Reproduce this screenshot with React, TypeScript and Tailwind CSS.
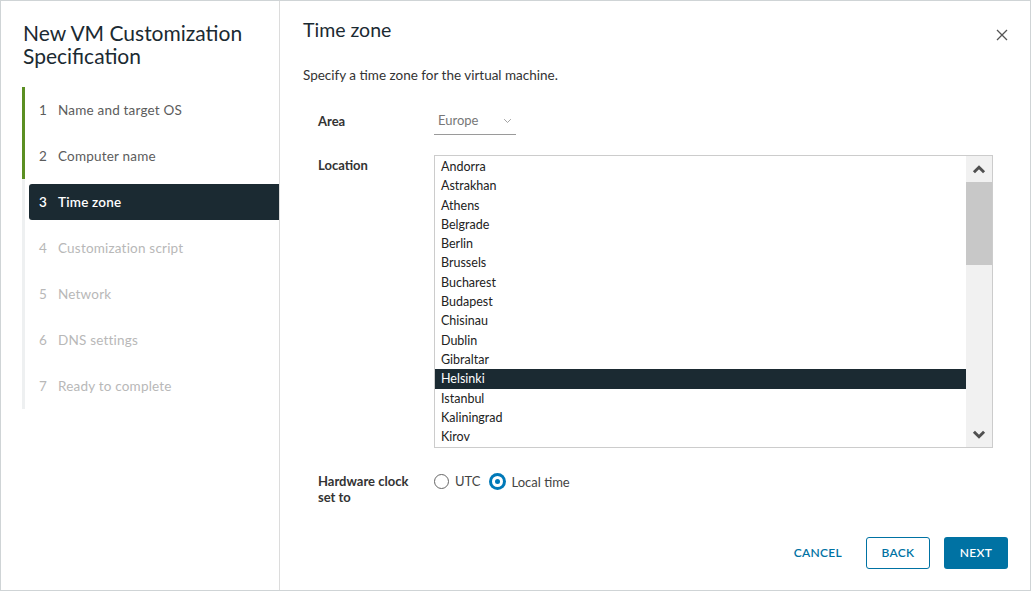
import { useState } from "react"

const steps = [
  { n: 1, label: "Name and target OS", state: "done" },
  { n: 2, label: "Computer name", state: "done" },
  { n: 3, label: "Time zone", state: "active" },
  { n: 4, label: "Customization script", state: "todo" },
  { n: 5, label: "Network", state: "todo" },
  { n: 6, label: "DNS settings", state: "todo" },
  { n: 7, label: "Ready to complete", state: "todo" },
]

const locations = [
  "Andorra",
  "Astrakhan",
  "Athens",
  "Belgrade",
  "Berlin",
  "Brussels",
  "Bucharest",
  "Budapest",
  "Chisinau",
  "Dublin",
  "Gibraltar",
  "Helsinki",
  "Istanbul",
  "Kaliningrad",
  "Kirov",
]

function Chevron({ dir, className, width = 2.4 }: { dir: "up" | "down"; className?: string; width?: number }) {
  return (
    <svg viewBox="0 0 12 8" className={className} fill="none" stroke="currentColor" strokeWidth={width}>
      {dir === "up" ? <path d="M1.5 6.5 6 2l4.5 4.5" /> : <path d="M1.5 1.5 6 6l4.5-4.5" />}
    </svg>
  )
}

export default function App() {
  const [location, setLocation] = useState("Helsinki")
  const [clock, setClock] = useState("local")

  return (
    <div
      className="w-[1031px] h-[591px] flex bg-white border border-[#cfd4d6] text-[#313131] overflow-hidden"
      style={{ fontFamily: "Lato, 'Noto Sans', sans-serif" }}
    >
      {/* Steps sidebar */}
      <aside className="w-[279px] shrink-0 border-r border-[#dcdcdc] pt-[20px]">
        <h1 className="pl-[22px] text-[21px] leading-[23px] text-[#1b2a32]">
          New VM Customization
          <br />
          Specification
        </h1>
        <ul className="mt-[20px] ml-[21px]">
          {steps.map((s) => (
            <li
              key={s.n}
              className={
                "h-[46px] flex items-center border-l-[3px] " +
                (s.state === "done" ? "border-[#5b8f22]" : "border-[#eef0f1]")
              }
            >
              <div
                className={
                  "ml-[4px] flex-1 h-[36px] flex items-center pl-[10px] text-[13.5px] tracking-[0.2px] rounded-l-[3px] " +
                  (s.state === "active"
                    ? "bg-[#1b2a32] text-white font-semibold"
                    : s.state === "done"
                    ? "text-[#5c5c5c]"
                    : "text-[#b8b8b8]")
                }
              >
                <span className="w-[19px]">{s.n}</span>
                <span>{s.label}</span>
              </div>
            </li>
          ))}
        </ul>
      </aside>

      {/* Content */}
      <main className="flex-1 flex flex-col pl-[23px] pr-[22px]">
        <div className="flex items-start justify-between pt-[17px]">
          <h2 className="text-[19.5px] leading-[24px] text-[#1b2a32]">Time zone</h2>
          <button className="mt-[11px] text-[#555]">
            <svg viewBox="0 0 12 12" className="w-[12px] h-[12px]" stroke="currentColor" strokeWidth={1.3}>
              <path d="M1 1l10 10M11 1 1 11" />
            </svg>
          </button>
        </div>
        <p className="mt-[24px] text-[13.5px] leading-[18px] text-[#333]">Specify a time zone for the virtual machine.</p>

        <div className="mt-[20px] pl-[15px] grid grid-cols-[116px_1fr] text-[13px]">
          <label className="pt-[8px] leading-[18px] font-bold text-[#333]">Area</label>
          <div>
            <div className="mt-[4px] w-[82px] h-[27px] flex items-center justify-between pl-[4px] pr-[4px] border-b border-[#9a9a9a] text-[#777]">
              <span>Europe</span>
              <Chevron dir="down" width={1.2} className="w-[9px] h-[6px] text-[#999]" />
            </div>
          </div>

          <label className="mt-[20px] pt-[1px] leading-[18px] font-bold text-[#333]">Location</label>
          <div className="mt-[20px] w-[559px] h-[293px] border border-[#cccccc] flex">
            <ul className="flex-1 pt-[1px]">
              {locations.map((l) => (
                <li
                  key={l}
                  onClick={() => setLocation(l)}
                  className={
                    "h-[19.3px] leading-[19.3px] pl-[6px] text-[12.5px] " +
                    (l === location ? "bg-[#1b2a32] text-white" : "text-[#222]")
                  }
                >
                  {l}
                </li>
              ))}
            </ul>
            <div className="w-[26px] bg-[#f1f1f1] flex flex-col">
              <div className="h-[26px] flex items-center justify-center text-[#505050]">
                <Chevron dir="up" width={2.6} className="w-[14px] h-[9px]" />
              </div>
              <div className="h-[83px] bg-[#c8c8c8]" />
              <div className="flex-1" />
              <div className="h-[26px] flex items-center justify-center text-[#505050]">
                <Chevron dir="down" width={2.6} className="w-[14px] h-[9px]" />
              </div>
            </div>
          </div>

          <label className="mt-[25px] leading-[16px] font-bold text-[#333]">
            Hardware clock
            <br />
            set to
          </label>
          <div className="mt-[25px] flex items-start gap-[8px] text-[13px] leading-[16px] text-[#444]">
            <button onClick={() => setClock("utc")} className="flex items-center gap-[6px]">
              <span
                className={
                  "w-[15px] h-[15px] rounded-full border-[1.5px] flex items-center justify-center " +
                  (clock === "utc" ? "border-[#0079b8]" : "border-[#666]")
                }
              >
                {clock === "utc" && <span className="w-[5px] h-[5px] rounded-full bg-[#0079b8]" />}
              </span>
              UTC
            </button>
            <button onClick={() => setClock("local")} className="flex items-center gap-[6px]">
              <span
                className={
                  "w-[17px] h-[17px] rounded-full flex items-center justify-center " +
                  (clock === "local" ? "bg-[#0079b8]" : "border-[1.5px] border-[#666]")
                }
              >
                {clock === "local" && (
                  <span className="w-[11px] h-[11px] rounded-full bg-white flex items-center justify-center">
                    <span className="w-[5px] h-[5px] rounded-full bg-[#0079b8]" />
                  </span>
                )}
              </span>
              Local time
            </button>
          </div>
        </div>

        <div className="mt-auto mb-[21px] flex justify-end items-center gap-[14px] text-[12px] font-semibold tracking-[0.3px]">
          <button className="h-[32px] px-[10px] text-[#0072a3]">CANCEL</button>
          <button className="w-[64px] h-[32px] rounded-[3px] border border-[#0072a3] text-[#0072a3]">BACK</button>
          <button className="w-[64px] h-[32px] rounded-[3px] bg-[#0072a3] text-white">NEXT</button>
        </div>
      </main>
    </div>
  )
}
